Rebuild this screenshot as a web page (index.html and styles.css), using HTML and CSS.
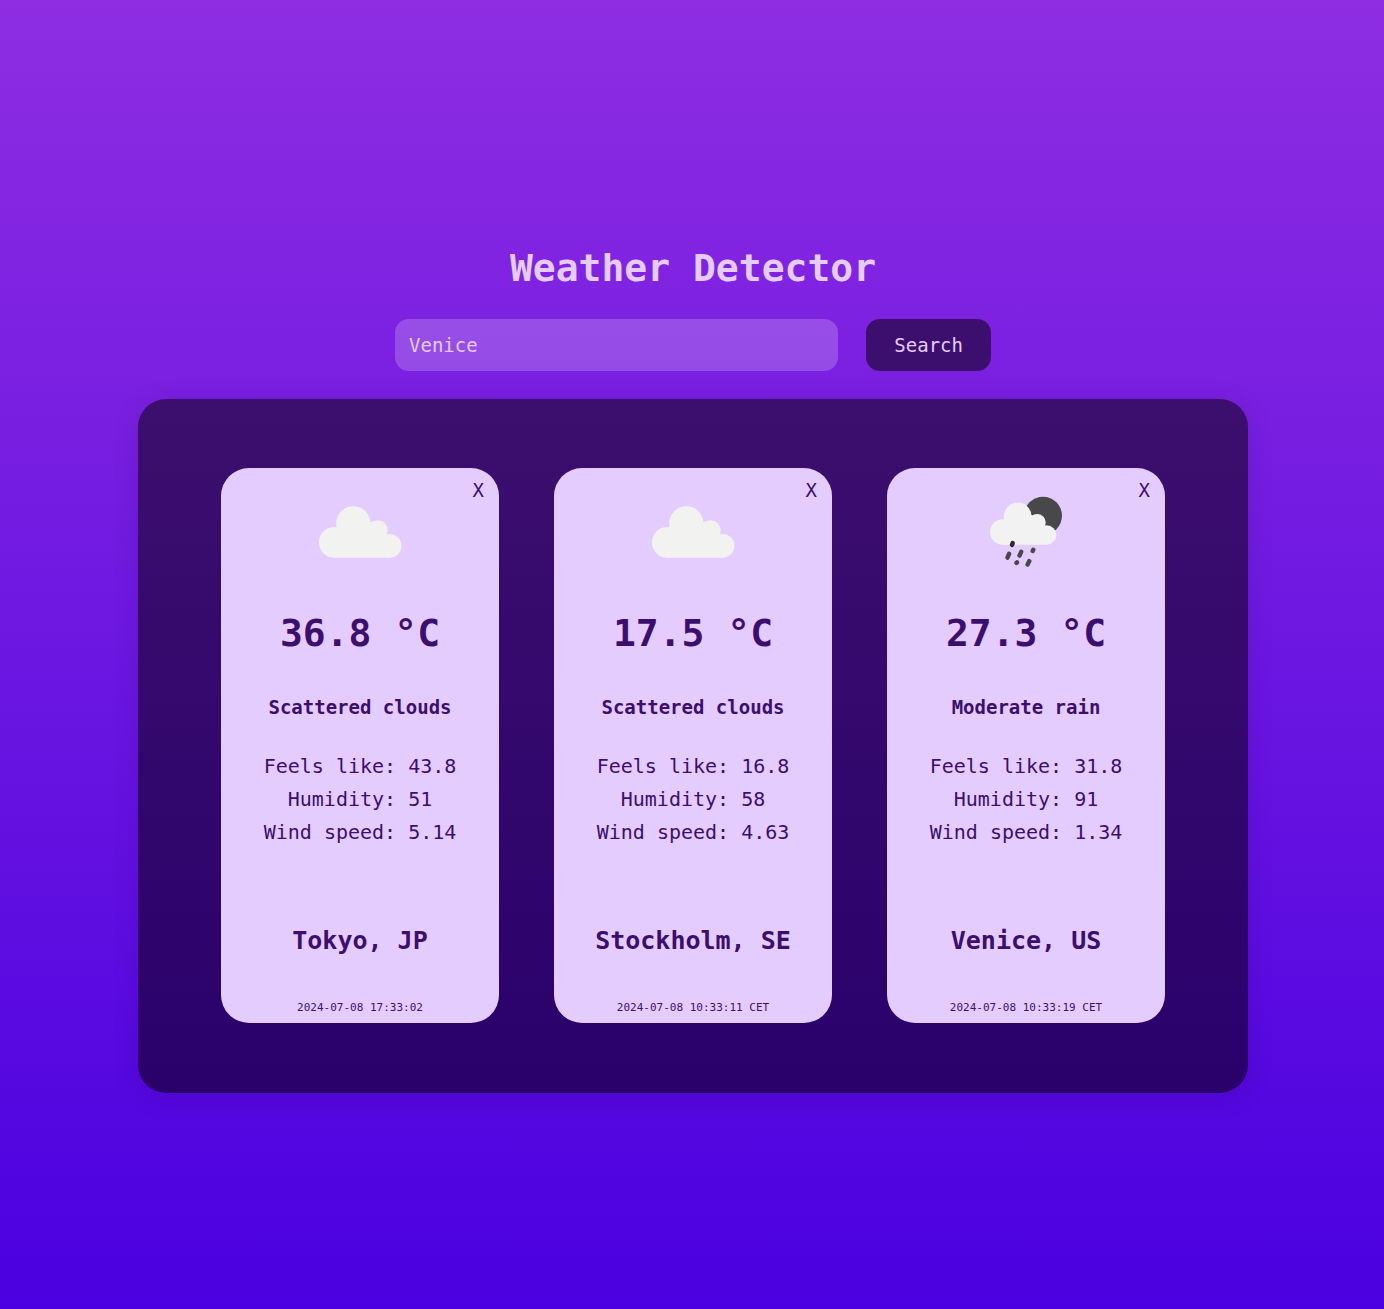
FILE: index.html
```html
<!DOCTYPE html>
<html lang="en">
<head>
  <meta charset="utf-8">
  <meta name="viewport" content="width=device-width, initial-scale=1">
  <title>Weather Detector</title>
  <link rel="stylesheet" href="styles.css">
</head>
<body>
  <svg class="symbols" aria-hidden="true">
    <symbol id="cloud" viewBox="0 0 100 100">
      <g fill="#f2f2f0">
        <circle cx="24.3" cy="60.3" r="15.4"/>
        <circle cx="43.3" cy="41.5" r="17.2"/>
        <circle cx="67.5" cy="48.5" r="10.2"/>
        <circle cx="79.6" cy="63.9" r="11.8"/>
        <path d="M24 75.7V46L43 40L61 40L76 53L80 60V75.7Z"/>
      </g>
    </symbol>
    <symbol id="rain" viewBox="0 0 100 100">
      <circle cx="67" cy="33.7" r="19" fill="#48484a"/>
      <g fill="#f2f2f2">
        <circle cx="26.7" cy="50" r="12.7"/>
        <circle cx="41.7" cy="34.5" r="13.9"/>
        <circle cx="61.2" cy="40.4" r="8.5"/>
        <circle cx="70.7" cy="53" r="9.7"/>
        <path d="M26.7 62.7V38L42 34L56 33L68 44L72 52L70.7 62.7Z"/>
      </g>
      <g stroke="#48484a" stroke-width="4.4" stroke-linecap="round">
        <path d="M36.7 61.1L36 62.9" stroke="#2c2c2e"/>
        <path d="M33.1 71.8L31.5 75.6M45.2 69.8L43.5 73.6M57.3 67.7L56.7 69M41 80.4L40.5 80.9M53.3 79.1L51.6 82.5"/>
      </g>
    </symbol>
  </svg>

  <main class="app">
    <h1 class="title">Weather Detector</h1>

    <form class="search">
      <input class="search-input" type="text" value="Venice" aria-label="City">
      <button class="search-button" type="button">Search</button>
    </form>

    <section class="panel" aria-label="Weather cards">
      <article class="card">
        <button class="close" type="button" aria-label="Remove Tokyo">X</button>
        <svg class="icon" aria-hidden="true"><use href="#cloud"/></svg>
        <p class="temperature">36.8 °C</p>
        <h3 class="description">Scattered clouds</h3>
        <ul class="details">
          <li>Feels like: 43.8</li>
          <li>Humidity: 51</li>
          <li>Wind speed: 5.14</li>
        </ul>
        <h2 class="city">Tokyo, JP</h2>
        <time class="time">2024-07-08 17:33:02</time>
      </article>

      <article class="card">
        <button class="close" type="button" aria-label="Remove Stockholm">X</button>
        <svg class="icon" aria-hidden="true"><use href="#cloud"/></svg>
        <p class="temperature">17.5 °C</p>
        <h3 class="description">Scattered clouds</h3>
        <ul class="details">
          <li>Feels like: 16.8</li>
          <li>Humidity: 58</li>
          <li>Wind speed: 4.63</li>
        </ul>
        <h2 class="city">Stockholm, SE</h2>
        <time class="time">2024-07-08 10:33:11 CET</time>
      </article>

      <article class="card">
        <button class="close" type="button" aria-label="Remove Venice">X</button>
        <svg class="icon" aria-hidden="true"><use href="#rain"/></svg>
        <p class="temperature">27.3 °C</p>
        <h3 class="description">Moderate rain</h3>
        <ul class="details">
          <li>Feels like: 31.8</li>
          <li>Humidity: 91</li>
          <li>Wind speed: 1.34</li>
        </ul>
        <h2 class="city">Venice, US</h2>
        <time class="time">2024-07-08 10:33:19 CET</time>
      </article>
    </section>
  </main>
</body>
</html>
```

FILE: styles.css
```css
* {
  box-sizing: border-box;
  margin: 0;
  padding: 0;
}

body {
  min-height: 100vh;
  display: flex;
  align-items: center;
  justify-content: center;
  background: linear-gradient(to bottom, #8e2de2, #4a00e0);
  color: #3c0f6e;
  font-family: Consolas, "DejaVu Sans Mono", monospace;
}

button,
input {
  border: none;
  font: inherit;
}

.symbols {
  position: absolute;
  width: 0;
  height: 0;
}

.app {
  width: 100%;
  padding: 28px 14px 0 16px;
  display: flex;
  flex-direction: column;
  align-items: center;
}

.title {
  margin-bottom: 27px;
  color: #e5ccff;
  font-size: 38px;
  line-height: 48px;
}

.search {
  width: 100%;
  max-width: 596px;
  margin-bottom: 28px;
  display: flex;
  gap: 28px;
  font-size: 19px;
}

.search-input {
  flex: 1;
  min-width: 0;
  height: 52px;
  padding: 0 14px;
  border-radius: 14px;
  background: rgba(255, 255, 255, 0.2);
  color: #e5ccff;
  outline: none;
}

.search-button {
  padding: 0 28px;
  border-radius: 14px;
  background: #3c0f6e;
  color: #e5ccff;
  cursor: pointer;
}

.panel {
  width: 100%;
  max-width: 1110px;
  padding: 69px 28px 70px;
  display: grid;
  grid-template-columns: repeat(auto-fit, 278px);
  justify-content: center;
  gap: 55px;
  border-radius: 28px;
  background: linear-gradient(to bottom, #3c0f6e, #2a006b);
  box-shadow: 0 4px 28px rgba(0, 0, 0, 0.1);
}

.card {
  position: relative;
  padding: 14px 14px 7px;
  display: flex;
  flex-direction: column;
  align-items: center;
  border-radius: 28px;
  background: #e5ccff;
  text-align: center;
}

.close {
  position: absolute;
  top: 10px;
  right: 15px;
  background: none;
  color: inherit;
  font-size: 19px;
  line-height: 24px;
  cursor: pointer;
}

.icon {
  width: 100px;
  height: 100px;
  margin-bottom: 27px;
}

.temperature {
  margin-bottom: 38px;
  font-size: 38px;
  font-weight: bold;
  line-height: 48px;
}

.description {
  margin-bottom: 31px;
  font-size: 19px;
  line-height: 24px;
}

.details {
  margin-bottom: 76px;
  list-style: none;
  font-size: 20px;
  line-height: 33px;
}

.city {
  margin-bottom: 43px;
  font-size: 25px;
  line-height: 32px;
}

.time {
  font-size: 11px;
  line-height: 16px;
}
```
